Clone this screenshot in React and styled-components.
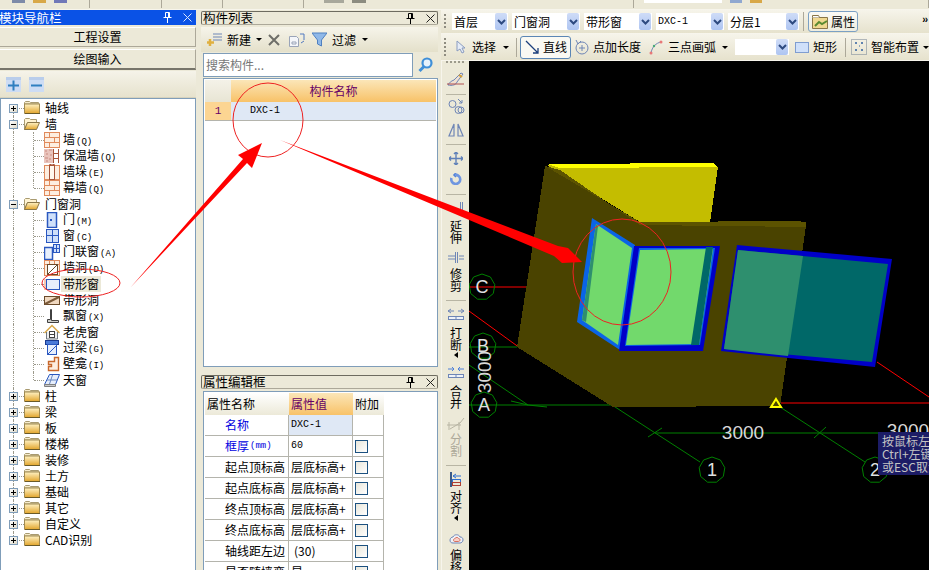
import React from 'react';
import styled, { createGlobalStyle } from 'styled-components';

const GlobalStyle = createGlobalStyle`
  html, body {
    margin: 0;
    padding: 0;
    background: #ece9d8;
  }
  * {
    box-sizing: border-box;
  }
`;

const CJK = '"Noto Sans CJK SC", "Liberation Sans", sans-serif';
const MONO = '"Liberation Mono", "Noto Sans CJK SC", monospace';

const Page = styled.div`
  position: relative;
  width: 929px;
  height: 570px;
  overflow: hidden;
  background: #ece9d8;
  font-family: ${CJK};
  font-size: 12px;
  line-height: 14px;
  color: #000;
`;

const TopStrip = styled.div`
  display: flex;
  height: 10px;
  background: #ece9d8;
  border-bottom: 1px solid #f7f5ec;
`;

const StripCell = styled.div`
  position: relative;
  width: ${(p) => p.$w}px;
  height: 8px;
  border-right: 1px solid #aca899;
  display: flex;
  gap: 8px;
  padding-left: ${(p) => p.$pl || 0}px;
`;

const Stub = styled.span`
  display: block;
  width: ${(p) => p.$w || 13}px;
  height: ${(p) => p.$h || 3}px;
  background: ${(p) => p.$c};
`;

const Columns = styled.div`
  display: grid;
  grid-template-columns: 196px 243px 1fr;
  height: 560px;
`;

const LeftPanel = styled.section`
  display: flex;
  flex-direction: column;
  height: 560px;
`;

const BlueTitle = styled.header`
  display: flex;
  align-items: center;
  justify-content: space-between;
  height: 15px;
  padding-right: 2px;
  background: #0a52e6;
  color: #fff;
  font-size: 12.5px;
  span {
    margin-left: -1px;
  }
`;

const TitleIcons = styled.div`
  display: flex;
  align-items: center;
  gap: 11px;
  padding-right: 2px;
`;

const NavButton = styled.button`
  display: block;
  width: 100%;
  height: ${(p) => p.$h}px;
  margin-top: 2px;
  padding: 0;
  background: #ece9d8;
  border: 0;
  border-top: 1px solid #fff;
  border-bottom: ${(p) => (p.$active ? '2px solid #77756a' : '1px solid #aca899')};
  border-right: 1px solid #aca899;
  font: inherit;
  color: #000;
`;

const TreeTools = styled.div`
  display: flex;
  align-items: center;
  gap: 8px;
  height: 27px;
  margin-top: 1px;
  padding-left: 6px;
  background: linear-gradient(#f5f3e9, #e6e2cd);
  border-bottom: 1px solid #d6d2bd;
`;

const Tree = styled.div`
  flex: 1;
  width: 196px;
  margin-top: 0;
  padding-top: 1px;
  padding-left: 3px;
  background: #fff;
  border: 1px solid #7f9db9;
  border-bottom: 0;
`;

const TreeRow = styled.div`
  display: flex;
  align-items: center;
  height: 16px;
`;

const Guide = styled.div`
  position: relative;
  flex: none;
  width: 20px;
  height: 16px;
  &::before {
    content: '';
    position: absolute;
    left: 9px;
    top: ${(p) => (p.$from === 'mid' ? '8px' : '0')};
    height: ${(p) => (p.$from === 'mid' || p.$to === 'mid' ? '8px' : '16px')};
    border-left: 1px dotted #9c9a8c;
  }
  &::after {
    content: '';
    display: ${(p) => (p.$branch ? 'block' : 'none')};
    position: absolute;
    left: 10px;
    top: 8px;
    width: 10px;
    border-top: 1px dotted #9c9a8c;
  }
`;

const Expander = styled.span`
  position: absolute;
  z-index: 1;
  left: 5px;
  top: 4px;
  width: 9px;
  height: 9px;
  background: linear-gradient(135deg, #fff, #dcd8c8);
  border: 1px solid #7f9db9;
  &::before {
    content: '';
    position: absolute;
    left: 1px;
    top: 3px;
    width: 5px;
    height: 1px;
    background: #000;
  }
  &::after {
    content: '';
    display: ${(p) => (p.$open ? 'none' : 'block')};
    position: absolute;
    left: 3px;
    top: 1px;
    width: 1px;
    height: 5px;
    background: #000;
  }
`;

const TreeLabel = styled.span`
  margin-left: ${(p) => (p.$child ? 1 : 3)}px;
  padding: 1px 2px;
  background: ${(p) => (p.$selected ? '#ece9d8' : 'transparent')};
  white-space: nowrap;
`;

const Hotkey = styled.span`
  margin-left: 1px;
  font-family: ${MONO};
  font-size: 9px;
`;

const MidPanel = styled.section`
  display: flex;
  flex-direction: column;
  height: 560px;
  padding-left: 5px;
  padding-right: 1px;
  overflow: hidden;
`;

const PaneTitle = styled.header`
  display: flex;
  flex: none;
  align-items: center;
  justify-content: space-between;
  height: 14px;
  margin-top: ${(p) => p.$mt || 0}px;
  background: #ece9d8;
  border: 1px solid #6e6c60;
  border-bottom-color: #aca899;
  border-radius: 2px;
  font-size: 12.5px;
  line-height: 12px;
  span {
    margin-left: 1px;
  }
`;

const ListTools = styled.div`
  display: flex;
  flex: none;
  align-items: center;
  height: 25px;
  margin-top: 2px;
  background: linear-gradient(#f6f4ea, #e4e0ca);
`;

const ListTool = styled.div`
  display: flex;
  align-items: center;
  gap: 5px;
  width: ${(p) => p.$w}px;
  padding-left: ${(p) => p.$pl || 0}px;
`;

const Caret = styled.span`
  flex: none;
  width: 0;
  height: 0;
  margin-left: ${(p) => p.$ml || 0}px;
  border-left: 3px solid transparent;
  border-right: 3px solid transparent;
  border-top: 3px solid #000;
`;

const SearchRow = styled.div`
  display: flex;
  flex: none;
  align-items: center;
  height: 26px;
  padding: 0 0 0 2px;
  background: #ece9d8;
`;

const SearchBox = styled.div`
  width: 210px;
  height: 24px;
  padding: 4px 2px;
  background: #fff;
  border: 1px solid #7f9db9;
  color: #777;
`;

const SearchButton = styled.div`
  display: flex;
  justify-content: center;
  width: 24px;
`;

const ListGrid = styled.div`
  flex: none;
  height: 289px;
  margin-left: 2px;
  padding: 1px;
  background: #fff;
  border: 1px solid #7f9db9;
`;

const ListHead = styled.div`
  display: grid;
  grid-template-columns: 26px 1fr;
  height: 22px;
`;

const Corner = styled.div`
  background: linear-gradient(#f4f2e8, #e8e5d4);
`;

const HeadCell = styled.div`
  display: flex;
  align-items: center;
  justify-content: ${(p) => (p.$left ? 'flex-start' : 'center')};
  padding-left: ${(p) => (p.$left ? 2 : 0)}px;
  background: ${(p) =>
    p.$hot ? 'linear-gradient(#fbe6b8, #f8c268)' : 'linear-gradient(#fff, #ece9d8)'};
  color: ${(p) => (p.$hot ? '#660066' : '#000')};
`;

const ListRow = styled.div`
  display: grid;
  grid-template-columns: 26px 1fr;
  height: 19px;
  border-bottom: 1px solid #b4b4ac;
`;

const RowNo = styled.div`
  display: flex;
  align-items: center;
  justify-content: center;
  background: #fcd592;
  color: #660066;
  font-family: ${MONO};
  font-size: 11px;
`;

const NameCell = styled.div`
  display: flex;
  align-items: center;
  padding-left: 19px;
  background: #dfe8f5;
  font-family: ${MONO};
  font-size: 10px;
`;

const PropGrid = styled.div`
  flex: 1;
  margin-top: 2px;
  margin-left: 2px;
  padding: 1px 0 0 1px;
  background: #fff;
  border: 1px solid #7f9db9;
  border-bottom: 0;
  overflow: hidden;
`;

const PropRow = styled.div`
  display: grid;
  grid-template-columns: 84px 64px 31px;
  width: 179px;
  height: ${(p) => (p.$head ? 22 : 21)}px;
`;

const PropName = styled.div`
  display: flex;
  align-items: center;
  padding-left: 20px;
  color: ${(p) => (p.$blue ? '#0000e0' : '#000')};
  white-space: nowrap;
  border-right: 1px solid #b4b4ac;
  border-bottom: 1px solid #b4b4ac;
`;

const PropValue = styled.div`
  display: flex;
  align-items: center;
  padding-left: ${(p) => (p.$paren ? 5 : 2)}px;
  background: ${(p) => (p.$current ? '#dfe8f5' : '#fff')};
  font-family: ${(p) => (p.$latin ? MONO : CJK)};
  font-size: ${(p) => (p.$latin ? 10 : 12)}px;
  white-space: nowrap;
  border-right: 1px solid #b4b4ac;
  border-bottom: 1px solid #b4b4ac;
`;

const PropExtra = styled.div`
  display: flex;
  align-items: center;
  padding-left: 2px;
  border-right: 1px solid #b4b4ac;
  border-bottom: 1px solid #b4b4ac;
`;

const CheckBox = styled.span`
  display: block;
  width: 13px;
  height: 13px;
  background: linear-gradient(135deg, #e8e6da, #fff);
  border: 1px solid #1c5180;
`;

const RightPanel = styled.section`
  display: flex;
  flex-direction: column;
  height: 560px;
  padding-left: 2px;
`;

const Bar = styled.div`
  position: relative;
  display: flex;
  flex: none;
  align-items: center;
  height: ${(p) => p.$h}px;
  padding-left: ${(p) => p.$pl}px;
  gap: ${(p) => p.$gap || 0}px;
  background: linear-gradient(#f6f4ea, #e6e2cd);
  border-bottom: 1px solid #f7f5ec;
  &::before {
    content: '';
    position: absolute;
    left: 3px;
    top: 4px;
    bottom: 4px;
    width: 2px;
    background: repeating-linear-gradient(#8e8c80 0 2px, transparent 2px 4px);
  }
`;

const Combo = styled.div`
  display: flex;
  flex: none;
  align-items: center;
  justify-content: space-between;
  width: ${(p) => p.$w}px;
  height: ${(p) => p.$h || 17}px;
  padding: 0 1px 0 2px;
  background: #fff;
  font-family: ${(p) => (p.$latin ? MONO : CJK)};
  font-size: ${(p) => (p.$latin ? 10 : 12)}px;
`;

const ComboArrow = styled.span`
  display: flex;
  flex: none;
  align-items: center;
  justify-content: center;
  width: 12px;
  height: 100%;
  background: linear-gradient(#cfdcf7, #aec5f2);
  border-radius: 2px;
`;

const VSep = styled.span`
  flex: none;
  width: 1px;
  height: 19px;
  margin: ${(p) => p.$m || '0 3px 0 4px'};
  background: #aca899;
`;

const PropsButton = styled.button`
  display: flex;
  flex: none;
  align-items: center;
  gap: 3px;
  width: 50px;
  height: 21px;
  padding: 0 0 0 3px;
  background: linear-gradient(#fbfaf5, #eeecdf);
  border: 1px solid #7ba0c4;
  border-radius: 3px;
  font: inherit;
`;

const Chevrons = styled.span`
  position: absolute;
  right: 2px;
  top: 3px;
  font-family: "Liberation Sans", sans-serif;
  font-size: 10px;
  font-weight: 700;
  letter-spacing: -1px;
`;

const Item = styled.div`
  display: flex;
  flex: none;
  align-items: center;
  gap: ${(p) => p.$gap || 4}px;
  width: ${(p) => p.$w}px;
  height: ${(p) => (p.$active ? 23 : 20)}px;
  padding-left: ${(p) => p.$pl || 0}px;
  background: ${(p) => (p.$active ? '#faf9f3' : 'transparent')};
  border: ${(p) => (p.$active ? '1px solid #5b86b5' : '0')};
  border-radius: 3px;
  white-space: nowrap;
`;

const Stage = styled.div`
  display: flex;
  flex: 1;
  min-height: 0;
`;

const SideBar = styled.div`
  display: flex;
  flex: none;
  flex-direction: column;
  align-items: center;
  width: 28px;
  padding-left: 1px;
  background: #ece9d8;
  border-left: 1px solid #f7f5ec;
  overflow: hidden;
`;

const SideGrip = styled.div`
  flex: none;
  width: 20px;
  height: 4px;
  background: repeating-linear-gradient(90deg, #9c9a8c 0 2px, transparent 2px 4px) top / 100% 2px no-repeat;
`;

const SideSep = styled.div`
  flex: none;
  width: 20px;
  height: 1px;
  margin-top: ${(p) => p.$t}px;
  margin-bottom: 3px;
  background: #b8b5a4;
`;

const SideTool = styled.div`
  display: flex;
  flex: none;
  flex-direction: column;
  align-items: center;
  padding-top: ${(p) => p.$top}px;
  svg {
    display: block;
  }
`;

const SideLabel = styled.div`
  margin-top: ${(p) => p.$gap}px;
  width: 12px;
  font-size: 12px;
  line-height: 12px;
  text-align: center;
  color: ${(p) => (p.$off ? '#aca899' : '#000')};
`;

const SideCaret = styled.span`
  width: 0;
  height: 0;
  margin-top: 1px;
  border-top: 3px solid transparent;
  border-bottom: 3px solid transparent;
  border-right: 4px solid #000;
`;

const Canvas = styled.div`
  position: relative;
  flex: 1;
  background: #000;
  overflow: hidden;
  svg {
    display: block;
  }
`;

const Hint = styled.div`
  position: absolute;
  left: 409px;
  top: 371px;
  width: 60px;
  height: 43px;
  padding: 2px 4px;
  background: #1c1c66;
  color: #c4c4c4;
  font-size: 12px;
  line-height: 13px;
  white-space: nowrap;
`;

const Annotations = styled.svg`
  position: absolute;
  left: 0;
  top: 0;
  pointer-events: none;
`;

const Pin = () => (
  <svg width="9" height="11" viewBox="0 0 9 11" fill="none" stroke="currentColor">
    <path d="M2.5 .5h4v5h-4zM5.5 1v4M.5 5.5h8M4.5 6v5" />
  </svg>
);

const Close = () => (
  <svg width="9" height="9" viewBox="0 0 9 9" fill="none" stroke="currentColor" opacity=".85">
    <path d="M.5 .5l8 8M8.5 .5l-8 8" />
  </svg>
);

const Folder = ({ open }) => (
  <svg width="16" height="14" viewBox="0 0 16 14">
    <defs>
      <linearGradient id="fold" x1="0" y1="0" x2="0" y2="1">
        <stop offset="0" stopColor="#fff2c4" />
        <stop offset="1" stopColor="#e2a52c" />
      </linearGradient>
    </defs>
    {open ? (
      <>
        <path d="M.5 12.5V2.5l1-1h4l1 1h6v3h-9z" fill="#fff3d2" stroke="#a89a70" />
        <path d="M.5 12.5l3-7h12l-3 7z" fill="url(#fold)" stroke="#8a7648" />
      </>
    ) : (
      <>
        <path d="M.5 3V1.5l1-1h4l1 1h8l.5 1V3z" fill="#f7eccb" stroke="#a89a70" />
        <path d="M.5 3h15v9.5H.5z" fill="url(#fold)" stroke="#a08a50" />
        <path d="M1 12.5h15" stroke="#6a5a28" />
      </>
    )}
  </svg>
);

const Brick = () => (
  <>
    <rect x=".5" y=".5" width="15" height="15" fill="#fdeee0" stroke="#e08a5c" />
    <path d="M0 5.5h16M0 10.5h16M5.5 0v5M10.5 5v5M5.5 10v6" stroke="#e08a5c" fill="none" />
  </>
);

const treeIcons = {
  brick: <Brick />,
  insul: (
    <>
      <rect x="0" y="1" width="9" height="14" fill="#e9c4bc" />
      <path d="M1 3h2M5 2h3M2 6h2M6 7h2M1 10h3M5 11h2M2 13h2" stroke="#c98a80" />
      <path d="M9.5 1v14M14.5 1v14M9 5.5h6M9 10.5h6" stroke="#a8553a" fill="none" />
    </>
  ),
  pier: (
    <>
      <rect x=".5" y="1.5" width="15" height="14" fill="#fdeee0" stroke="#e08a5c" />
      <rect x="5.5" y="1.5" width="5" height="14" fill="#fff8ee" stroke="#a8553a" />
      <path d="M5 1l3-1 3 1" stroke="#a8553a" fill="none" />
    </>
  ),
  door: (
    <>
      <rect x="3.5" y=".5" width="9" height="15" fill="#cfe0fa" stroke="#2a58c0" strokeWidth="1.5" />
      <rect x="6" y="7" width="2" height="2" fill="#2a58c0" />
    </>
  ),
  window: (
    <>
      <rect x="2.5" y="1.5" width="12" height="13" fill="#cfe0fa" stroke="#2a58c0" />
      <path d="M8.5 2v12M3 7.5h11" stroke="#2a58c0" />
    </>
  ),
  doorwin: (
    <>
      <rect x=".5" y="3.5" width="8" height="12" fill="#e8f0fc" stroke="#2a58c0" strokeWidth="1.5" />
      <rect x="9.5" y=".5" width="6" height="8" fill="#cfe0fa" stroke="#2a58c0" />
      <path d="M9.5 4.5h6M12.5 1v7" stroke="#2a58c0" />
    </>
  ),
  hole: (
    <>
      <rect x=".5" y=".5" width="15" height="15" fill="#fdeee0" stroke="#e08a5c" />
      <path d="M0 4.5h16M5.5 0v5M10.5 0v5" stroke="#e08a5c" />
      <rect x="3.5" y="4.5" width="10" height="10" fill="#fff" stroke="#6a4a2a" />
      <path d="M3.5 14.5l10-10" stroke="#6a4a2a" />
    </>
  ),
  strip: (
    <>
      <rect x="0" y="3" width="16" height="11" fill="#f8c8b0" />
      <rect x="2.5" y="3.5" width="13" height="10" fill="#e6eefc" stroke="#2a58c0" />
    </>
  ),
  striphole: (
    <>
      <rect x=".5" y="4.5" width="15" height="8" fill="#f0d8c0" stroke="#6a4a2a" />
      <path d="M1 12L15 5" stroke="#7a5a38" strokeWidth="2" />
    </>
  ),
  bay: <path d="M6.5 1.5v10h-3v3h11v-2h-7v-11z" fill="#d0d0cc" stroke="#404040" />,
  dormer: (
    <>
      <path d="M.5 9L8 1.5 15.5 9" fill="none" stroke="#d8a848" strokeWidth="1.5" />
      <path d="M2.5 8v7h11V8" fill="#f0f0f0" stroke="#707880" />
      <rect x="5.5" y="7.5" width="5" height="6" fill="#fff" stroke="#404040" />
      <path d="M5.5 10.5h5" stroke="#404040" />
    </>
  ),
  lintel: (
    <>
      <rect x="1.5" y=".5" width="13" height="4" fill="#4a7ad8" stroke="#1a3a90" />
      <rect x="3.5" y="4.5" width="9" height="10" fill="#e6eefc" stroke="#2a58c0" />
      <path d="M4 14l8-8" stroke="#2a58c0" />
    </>
  ),
  niche: <path d="M10.5 1.5h4v13h-10v-4h3v-2h-3v-3h6z" fill="#fdeee0" stroke="#c8682c" strokeWidth="1.4" />,
  sky: (
    <>
      <path d="M5.5 2.5h10l-4 10H.5z" fill="#e6eefc" stroke="#2a58c0" />
      <path d="M3 8h10M8.5 3l-3 9" stroke="#6a88c0" />
      <path d="M.5 12.5h11v2H.5z" fill="#c8c8c8" stroke="#808080" />
    </>
  ),
};

const TreeIcon = ({ kind }) => (
  <svg width="16" height="16" viewBox="0 0 16 16" style={{ flex: 'none' }}>
    {treeIcons[kind]}
  </svg>
);

const Square = ({ minus }) => (
  <svg width="15" height="15" viewBox="0 0 15 15">
    <rect width="15" height="15" fill="#cddcf4" />
    <rect y="0" width="15" height="3" fill="#b9cdeb" />
    <path d={minus ? 'M2 8.5h11' : 'M2 8.5h11M7.5 3.5v10'} stroke="#2f7fc0" strokeWidth="2" />
  </svg>
);

const sideIcons = {
  brush: (
    <svg width="18" height="14" viewBox="0 0 18 14">
      <path d="M1 13c4 1 8 0 9-3l6-8-2-1-7 7c-3 1-5 3-6 5z" fill="#f0e0d0" stroke="#6f86b6" />
      <path d="M12 3l3 2" stroke="#d8a030" strokeWidth="2" />
      <path d="M0 12h17" stroke="#b05050" />
    </svg>
  ),
  cycles: (
    <svg width="17" height="17" viewBox="0 0 17 17" fill="none" stroke="#6f86b6">
      <circle cx="4.5" cy="6" r="3.5" />
      <circle cx="10.5" cy="12" r="3.5" />
      <circle cx="13" cy="12" r="3" />
      <path d="M10 1l4 4M14 2v3h-3" />
    </svg>
  ),
  mirror: (
    <svg width="16" height="14" viewBox="0 0 16 14" fill="none" stroke="#6f86b6">
      <path d="M6 1L1 13h5zM10 1l5 12h-5z" strokeWidth="1.2" />
    </svg>
  ),
  move: (
    <svg width="14" height="13" viewBox="0 0 14 13" fill="none" stroke="#5f80b8" strokeWidth="1.4">
      <path d="M7 0v13M0 6.5h14M5 2l2-2 2 2M5 11l2 2 2-2M2 4.5l-2 2 2 2M12 4.5l2 2-2 2" />
    </svg>
  ),
  rotate: (
    <svg width="13" height="12" viewBox="0 0 13 12" fill="none">
      <path d="M6 0l-2 2 2 2" stroke="#4f80d8" strokeWidth="1.6" />
      <path d="M5 2a4.5 4.5 0 1 1-3.5 3" stroke="#6f96e0" strokeWidth="2.6" />
    </svg>
  ),
  extend: (
    <svg width="16" height="11" viewBox="0 0 16 11" fill="none" stroke="#6f86b6">
      <path d="M12.5 0v11M14.5 0v11M0 8h9" />
    </svg>
  ),
  trim: (
    <svg width="16" height="11" viewBox="0 0 16 11" fill="none" stroke="#6f86b6">
      <path d="M7.5 0v11M9.5 0v11M0 4h7M0 7h7M11 4h5M11 7h5" />
    </svg>
  ),
  breakup: (
    <svg width="16" height="12" viewBox="0 0 16 12" fill="none" stroke="#6f86b6">
      <path d="M0 3h6M3 1L0 3l3 2M16 3h-6M13 1l3 2-3 2" />
      <rect x=".5" y="8.5" width="15" height="3" fill="#eef2f8" />
      <path d="M8 8v4" />
    </svg>
  ),
  merge: (
    <svg width="16" height="11" viewBox="0 0 16 11" fill="none" stroke="#4f80d8">
      <path d="M0 2h6M4 0l2 2-2 2M16 2h-6M12 0l-2 2 2 2" />
      <rect x=".5" y="7.5" width="15" height="3" fill="#eef2f8" stroke="#6f86b6" />
      <path d="M8 7v4" stroke="#6f86b6" />
    </svg>
  ),
  split: (
    <svg width="18" height="13" viewBox="0 0 18 13" fill="none" stroke="#b8b5a4">
      <path d="M0 8h14M2 5v8M12 5v8M3 12l10-6 4-5" />
    </svg>
  ),
  align: (
    <svg width="12" height="15" viewBox="0 0 12 15" fill="none">
      <path d="M1 0v15" stroke="#3a5a88" strokeWidth="2" />
      <path d="M3 4h8M6 2L3 4l3 2" stroke="#3070d0" />
      <rect x="2.5" y="7.5" width="8" height="3" stroke="#3070d0" />
      <rect x="2.5" y="10.5" width="8" height="3" stroke="#b04030" />
    </svg>
  ),
  offset: (
    <svg width="15" height="11" viewBox="0 0 15 11">
      <path d="M1 7c0-2 2-3 3-3 1-3 6-3 7 0 2 0 3 1 3 3s-2 3-3 3H4C2 10 1 9 1 7z" fill="#eef2f8" stroke="#6f86b6" />
      <path d="M4.5 7c0-1 1-1.500 1.500-1.500 1-1.500 3-1.500 3.500 0 1 0 1.500.5 1.500 1.500s-1 1.500-1.500 1.500H6C5 8.500 4.500 8 4.500 7z" fill="#f8d0c8" stroke="#d87060" />
    </svg>
  ),
};

const tree = [
  { label: '轴线', folder: true },
  { label: '墙', folder: true, open: true },
  { label: '墙', key: 'Q', icon: 'brick' },
  { label: '保温墙', key: 'Q', icon: 'insul' },
  { label: '墙垛', key: 'E', icon: 'pier' },
  { label: '幕墙', key: 'Q', icon: 'brick', last: true },
  { label: '门窗洞', folder: true, open: true },
  { label: '门', key: 'M', icon: 'door' },
  { label: '窗', key: 'C', icon: 'window' },
  { label: '门联窗', key: 'A', icon: 'doorwin' },
  { label: '墙洞', key: 'D', icon: 'hole' },
  { label: '带形窗', icon: 'strip', selected: true },
  { label: '带形洞', icon: 'striphole' },
  { label: '飘窗', key: 'X', icon: 'bay' },
  { label: '老虎窗', icon: 'dormer' },
  { label: '过梁', key: 'G', icon: 'lintel' },
  { label: '壁龛', key: 'I', icon: 'niche' },
  { label: '天窗', icon: 'sky', last: true },
  ...['柱', '梁', '板', '楼梯', '装修', '土方', '基础', '其它', '自定义', 'CAD识别'].map((label) => ({
    label,
    folder: true,
  })),
];

const props = [
  { name: '起点顶标高', value: '层底标高+' },
  { name: '起点底标高', value: '层底标高+' },
  { name: '终点顶标高', value: '层底标高+' },
  { name: '终点底标高', value: '层底标高+' },
  { name: '轴线距左边', value: '(30)', paren: true },
  { name: '是否随墙变', value: '是' },
];

const sideTools = [
  { icon: 'brush', top: 7 },
  { sep: 8 },
  { icon: 'cycles', top: 0 },
  { icon: 'mirror', top: 8 },
  { sep: 7 },
  { icon: 'move', top: 4 },
  { icon: 'rotate', top: 8 },
  { sep: 9 },
  { icon: 'extend', top: 4, text: '延伸', gap: 7 },
  { icon: 'trim', top: 8, text: '修剪', gap: 5 },
  { sep: 8 },
  { icon: 'breakup', top: 4, text: '打断', gap: 7, caret: true },
  { icon: 'merge', top: 9, text: '合并', gap: 7 },
  { icon: 'split', top: 8, text: '分割', gap: 3, off: true },
  { sep: 8 },
  { icon: 'align', top: 3, text: '对齐', gap: 3, caret: true },
  { icon: 'offset', top: 12, text: '偏移', gap: 5 },
];

const combos = [
  { text: '首层', w: 56 },
  { text: '门窗洞', w: 68 },
  { text: '带形窗', w: 68 },
  { text: 'DXC-1', w: 68, latin: true },
  { text: '分层1', w: 71 },
];

const Arrow = () => (
  <svg width="9" height="6" viewBox="0 0 9 6" fill="none" stroke="#2d4a80" strokeWidth="2">
    <path d="M1 1l3.500 3.500L8 1" />
  </svg>
);

// the drawing is given in page coordinates, so the viewBox starts at the canvas corner
const octagon = (cx, cy, r) =>
  Array.from({ length: 9 }, (_, i) => {
    const a = (i * 2 * Math.PI) / 9 - Math.PI / 2;
    return `${(cx + r * Math.cos(a)).toFixed(1)},${(cy + r * Math.sin(a)).toFixed(1)}`;
  }).join(' ');

const axes = [
  { x: 482, y: 287, t: 'C' },
  { x: 483, y: 346, t: 'B' },
  { x: 484, y: 405, t: 'A' },
  { x: 712, y: 470, t: '1' },
  { x: 875, y: 470, t: '2' },
];

const Drawing = () => (
  <svg width="460" height="509" viewBox="469 61 460 509">
    <g fill="none" stroke="#008000">
      <path d="M469 405h144M469 347h48M469 365l59 40M612 405l88 57M780 407l85 55M655 433h225" />
      <path d="M511 401l17 4 19 2M648 437l14-9M814 438l12-11" />
    </g>
    <g fill="none" stroke="#f00">
      <path d="M469 287h57M469 311l51 37M781 403h148M877 362l52 35" />
    </g>
    <g shapeRendering="crispEdges">
      <polygon points="547,165 713,163 718,167 710,222 640,222" fill="#c4bd00" />
      <polygon points="547,164 713,163 718,167 560,168" fill="#ffff00" />
      <polygon points="545,166 517,347 613,407 780,406 806,226 640,222" fill="#4a4300" />
      <polygon points="545,166 560,170 640,225 806,227 806,222 796,221 640,222" fill="#5c5300" />
    </g>
    <polygon points="592,218 635,245 620,350 577,322" fill="#0a64e6" />
    <polygon points="596,224 632,248 618,345 582,320" fill="#72d96c" />
    <polygon points="596,224 598,226 586,322 582,320" fill="#2e8f6e" />
    <polygon points="634,246 720,246 703,351 619,351" fill="#0000c8" />
    <polygon points="639,248 715,248 700,345 625,346" fill="#0a64e6" />
    <polygon points="640,250 713,249 699,344 626,345" fill="#72d96c" />
    <polygon points="706,247 713,247 699,345 691,345" fill="#006868" />
    <polygon points="737,245 892,259 875,367 721,351" fill="#0000c8" />
    <polygon points="738,250 888,264 872,362 724,349" fill="#006868" />
    <polygon points="738,250 803,256 788,356 724,349" fill="#2e8f6e" />
    <polygon points="776,399 781,407 771,407" fill="none" stroke="#ffff00" strokeWidth="2" />
    {axes.map((a) => (
      <g key={a.t}>
        <polygon points={octagon(a.x, a.y, 13)} fill="none" stroke="#008000" />
        <text
          x={a.x}
          y={a.y + 6}
          fill="#e0e0e0"
          fontFamily='"Liberation Sans", sans-serif'
          fontSize="18"
          textAnchor="middle"
        >
          {a.t}
        </text>
      </g>
    ))}
    <g fill="#d8d8d8" fontFamily='"Liberation Sans", sans-serif' fontSize="19" textAnchor="middle">
      <text x="743" y="439">3000</text>
      <text x="908" y="437">3000</text>
      <text transform="translate(491 372) rotate(-90)">3000</text>
    </g>
  </svg>
);

export default function App() {
  return (
    <Page>
      <GlobalStyle />
      <TopStrip>
        <StripCell $w={90} $pl={12}>
          <Stub $c="#7d8aa8" />
          <Stub $c="#d8a848" />
          <Stub $c="#7078b8" />
        </StripCell>
        <StripCell $w={72} />
        <StripCell $w={61} />
        <StripCell $w={81} />
        <StripCell $w={330} $pl={20}>
          <Stub $c="#a8a89c" $w={20} />
          <Stub $c="#8c8c80" $w={14} />
        </StripCell>
        <StripCell $w={295} $pl={10}>
          <Stub $c="#fff" $w={78} />
          <Stub $c="#90a8d0" $w={12} />
          <Stub $c="#d8a848" $w={12} />
        </StripCell>
      </TopStrip>
      <Columns>
        <LeftPanel>
          <BlueTitle>
            <span>模块导航栏</span>
            <TitleIcons>
              <Pin />
              <Close />
            </TitleIcons>
          </BlueTitle>
          <NavButton $h={20}>工程设置</NavButton>
          <NavButton $h={21} $active>
            绘图输入
          </NavButton>
          <TreeTools>
            <Square />
            <Square minus />
          </TreeTools>
          <Tree>
            {tree.map((row, i) => {
              const isFolder = row.folder;
              const lastTop = i === tree.length - 1;
              return (
                <TreeRow key={`${row.label}-${i}`}>
                  <Guide
                    $from={i === 0 ? 'mid' : undefined}
                    $to={lastTop ? 'mid' : undefined}
                    $branch={isFolder}
                  >
                    {isFolder && <Expander $open={row.open} />}
                  </Guide>
                  {isFolder ? (
                    <Folder open={row.open} />
                  ) : (
                    <>
                      <Guide $to={row.last ? 'mid' : undefined} $branch />
                      <TreeIcon kind={row.icon} />
                    </>
                  )}
                  <TreeLabel $child={!isFolder} $selected={row.selected}>
                    {row.label}
                    {row.key && <Hotkey>({row.key})</Hotkey>}
                  </TreeLabel>
                </TreeRow>
              );
            })}
          </Tree>
        </LeftPanel>

        <MidPanel>
          <PaneTitle $mt={1}>
            <span>构件列表</span>
            <TitleIcons>
              <Pin />
              <Close />
            </TitleIcons>
          </PaneTitle>
          <ListTools>
            <ListTool $w={67} $pl={6}>
              <svg width="15" height="15" viewBox="0 0 15 15" fill="none">
                <path d="M6 2h9M6 5h9M6 8h9" stroke="#6f86b6" />
                <path d="M3 7v7M0 10.500h7" stroke="#e0b040" strokeWidth="2.500" />
              </svg>
              <span>新建</span>
              <Caret />
            </ListTool>
            <ListTool $w={20}>
              <svg width="12" height="12" viewBox="0 0 12 12" fill="none" stroke="#6e6e68" strokeWidth="2">
                <path d="M1 1l10 10M11 1L1 11" />
              </svg>
            </ListTool>
            <ListTool $w={24} $pl={1}>
              <svg width="16" height="14" viewBox="0 0 16 14" fill="none" stroke="#9aa4b8">
                <path d="M.5 3.500h7l2 2v8h-9z" fill="#f4f6fa" />
                <path d="M11 1h4v6M15 8l-3 2" stroke="#5078c0" />
                <path d="M3 9h4v2H3z" />
              </svg>
            </ListTool>
            <ListTool $w={56}>
              <svg width="15" height="15" viewBox="0 0 15 15">
                <path d="M0 1h15L9.500 8v6l-4-2V8z" fill="#8fb8e8" stroke="#4f80c0" />
              </svg>
              <span>过滤</span>
              <Caret $ml={1} />
            </ListTool>
          </ListTools>
          <SearchRow>
            <SearchBox>搜索构件...</SearchBox>
            <SearchButton>
              <svg width="15" height="16" viewBox="0 0 15 16" fill="none">
                <circle cx="9" cy="6" r="4.500" stroke="#3f8fd8" strokeWidth="2.200" fill="#e6f2fc" />
                <path d="M6 9.500L1.500 14" stroke="#3f8fd8" strokeWidth="3" />
              </svg>
            </SearchButton>
          </SearchRow>
          <ListGrid>
            <ListHead>
              <Corner />
              <HeadCell $hot>构件名称</HeadCell>
            </ListHead>
            <ListRow>
              <RowNo>1</RowNo>
              <NameCell>DXC-1</NameCell>
            </ListRow>
          </ListGrid>
          <PaneTitle $mt={8}>
            <span>属性编辑框</span>
            <TitleIcons>
              <Pin />
              <Close />
            </TitleIcons>
          </PaneTitle>
          <PropGrid>
            <PropRow $head>
              <HeadCell $left>属性名称</HeadCell>
              <HeadCell $left $hot>
                属性值
              </HeadCell>
              <HeadCell $left>附加</HeadCell>
            </PropRow>
            <PropRow>
              <PropName $blue>名称</PropName>
              <PropValue $current $latin>
                DXC-1
              </PropValue>
              <PropExtra />
            </PropRow>
            <PropRow>
              <PropName $blue>
                框厚<Hotkey>(mm)</Hotkey>
              </PropName>
              <PropValue $latin>60</PropValue>
              <PropExtra>
                <CheckBox />
              </PropExtra>
            </PropRow>
            {props.map((row) => (
              <PropRow key={row.name}>
                <PropName>{row.name}</PropName>
                <PropValue $paren={row.paren}>{row.value}</PropValue>
                <PropExtra>
                  <CheckBox />
                </PropExtra>
              </PropRow>
            ))}
          </PropGrid>
        </MidPanel>

        <RightPanel>
          <Bar $h={24} $pl={11} $gap={4}>
            {combos.map((c) => (
              <Combo key={c.text} $w={c.w} $latin={c.latin}>
                {c.text}
                <ComboArrow>
                  <Arrow />
                </ComboArrow>
              </Combo>
            ))}
            <VSep $m="0" />
            <PropsButton>
              <svg width="16" height="15" viewBox="0 0 16 15">
                <path d="M.5 3.500h15v11H.5z" fill="#f0d890" stroke="#8a7648" />
                <path d="M.5 3.500v-2h6l1 2" fill="#fff" stroke="#8a7648" />
                <path d="M3 12l4-4 3 2 5-3" stroke="#5a8a30" strokeWidth="2" fill="none" />
              </svg>
              属性
            </PropsButton>
            <Chevrons>››</Chevrons>
          </Bar>
          <Bar $h={27} $pl={11}>
            <Item $w={62} $pl={4} $gap={6}>
              <svg width="10" height="14" viewBox="0 0 10 14">
                <path d="M1 1v10l3-2 2 4 2-1-2-4h3z" fill="#e6ecf6" stroke="#8a9cc0" />
              </svg>
              选择
              <Caret $ml={1} />
            </Item>
            <VSep $m="0 3px 0 2px" />
            <Item $w={51} $pl={4} $active>
              <svg width="14" height="14" viewBox="0 0 14 14" fill="none" stroke="#1c3f7c" strokeWidth="1.300">
                <path d="M1 1l12 12M13 8v5H8" />
              </svg>
              直线
            </Item>
            <Item $w={74} $pl={3}>
              <svg width="15" height="16" viewBox="0 0 15 16" fill="none" stroke="#6f86b6">
                <circle cx="8" cy="9" r="6" />
                <path d="M5 9h6M8 6v6M2 1l2 4 3-3" />
              </svg>
              点加长度
            </Item>
            <Item $w={90} $pl={4} $gap={5}>
              <svg width="14" height="15" viewBox="0 0 14 15" fill="none">
                <path d="M2 13C3 7 7 3 12 2" stroke="#6f86b6" />
                <circle cx="2" cy="13" r="1.500" fill="#e87878" />
                <circle cx="12" cy="2" r="1.500" fill="#e87878" />
                <circle cx="5" cy="6" r="1.200" fill="#48a878" />
              </svg>
              三点画弧
              <Caret $ml={1} />
            </Item>
            <Combo $w={54} $h={16}>
              <span />
              <ComboArrow>
                <Arrow />
              </ComboArrow>
            </Combo>
            <Item $w={52} $pl={6}>
              <svg width="14" height="11" viewBox="0 0 14 11">
                <rect x=".5" y=".5" width="13" height="10" fill="#cfe0fa" stroke="#7f9dd0" />
              </svg>
              矩形
            </Item>
            <VSep $m="0 3px 0 4px" />
            <Item $w={76} $pl={2}>
              <svg width="16" height="16" viewBox="0 0 16 16" fill="none" style={{ flex: 'none' }}>
                <rect x=".5" y=".5" width="15" height="15" stroke="#6f7f90" strokeDasharray="1 1" />
                <path d="M4 4h2M10 4h2M4 11h2M10 11h2M8 7h1M5 3v2M11 3v2M5 10v2M11 10v2" stroke="#3060a0" />
              </svg>
              智能布置
              <Caret />
            </Item>
          </Bar>
          <Stage>
            <SideBar>
              <SideGrip />
              {sideTools.map((t, i) =>
                t.sep ? (
                  <SideSep key={i} $t={t.sep} />
                ) : (
                  <SideTool key={t.icon} $top={t.top}>
                    {sideIcons[t.icon]}
                    {t.text && (
                      <SideLabel $gap={t.gap} $off={t.off}>
                        {t.text}
                      </SideLabel>
                    )}
                    {t.caret && <SideCaret />}
                  </SideTool>
                ),
              )}
            </SideBar>
            <Canvas>
              <Drawing />
              <Hint>
                按鼠标左键
                <br />
                Ctrl+左键
                <br />
                或ESC取消
              </Hint>
            </Canvas>
          </Stage>
        </RightPanel>
      </Columns>
      <Annotations width="929" height="570" viewBox="0 0 929 570">
        <g fill="none" stroke="#ee2222">
          <ellipse cx="81" cy="283" rx="39" ry="14" />
          <ellipse cx="268" cy="120" rx="35" ry="37" />
          <ellipse cx="622" cy="272" rx="49" ry="53" />
        </g>
        <g fill="#ff0000">
          <polygon points="130,288 247,163 252,168 262,143 238,155 243,159" />
          <polygon points="280,140 558,246 568,248 582,262 562,263 554,256" />
        </g>
      </Annotations>
    </Page>
  );
}
